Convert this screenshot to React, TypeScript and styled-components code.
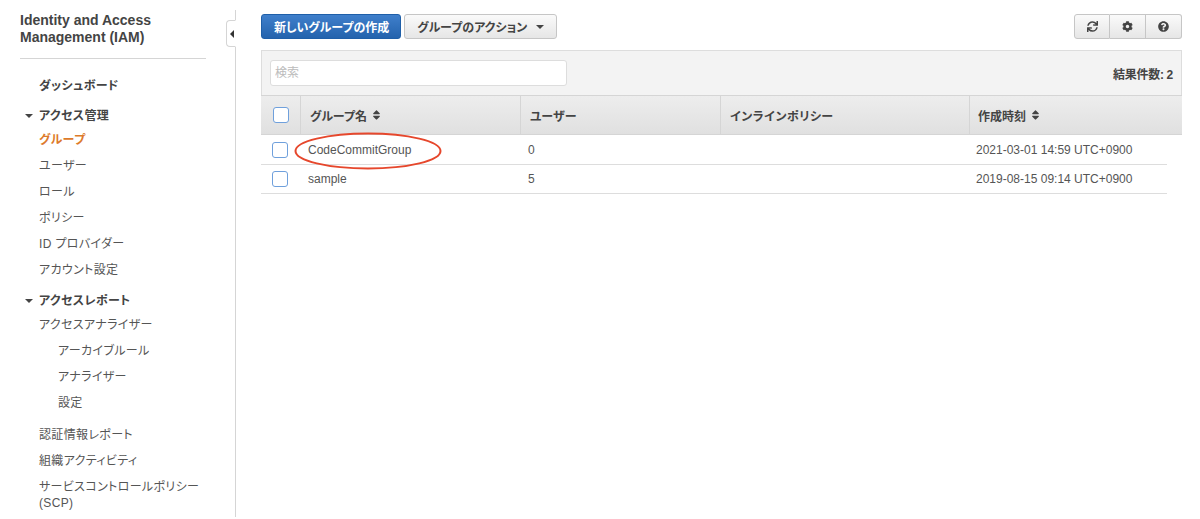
import * as React from "react";
import styled, { createGlobalStyle } from "styled-components";
import { FaCog, FaQuestionCircle, FaSort, FaSync } from "react-icons/fa";

const columns = "39px 220px 200px 249px 213px";

const GlobalStyle = createGlobalStyle`
  html, body {
    margin: 0;
    padding: 0;
    background: #fff;
    overflow: hidden;
  }

  body {
    font-family: "Liberation Sans", "Noto Sans CJK JP", sans-serif;
    font-size: 12px;
    font-feature-settings: "palt";
    color: #555;
  }
`;

export default function App() {
  return (
    <Page>
      <GlobalStyle />
      <Sidebar>
        <Title>Identity and Access Management (IAM)</Title>
        <Nav>
          <NavItem data-strong="true">ダッシュボード</NavItem>
          <Section $gap={6}>
            <SectionHead><Caret />アクセス管理</SectionHead>
            <NavItem data-active="true">グループ</NavItem>
            <NavItem>ユーザー</NavItem>
            <NavItem>ロール</NavItem>
            <NavItem>ポリシー</NavItem>
            <NavItem>ID プロバイダー</NavItem>
            <NavItem>アカウント設定</NavItem>
          </Section>
          <Section $gap={7}>
            <SectionHead><Caret />アクセスレポート</SectionHead>
            <NavItem>アクセスアナライザー</NavItem>
            <SubItem>アーカイブルール</SubItem>
            <SubItem>アナライザー</SubItem>
            <SubItem>設定</SubItem>
          </Section>
          <Section $gap={6}>
            <NavItem>認証情報レポート</NavItem>
            <NavItem>組織アクティビティ</NavItem>
            <NavItem data-wrap="true">サービスコントロールポリシー<br />(SCP)</NavItem>
          </Section>
        </Nav>
        <Toggle><ToggleArrow /></Toggle>
      </Sidebar>
      <Main>
        <Toolbar>
          <PrimaryButton>新しいグループの作成</PrimaryButton>
          <Button>グループのアクション<DownCaret /></Button>
          <IconGroup>
            <IconButton><FaSync size={11} /></IconButton>
            <IconButton><FaCog size={11} /></IconButton>
            <IconButton><FaQuestionCircle size={11} /></IconButton>
          </IconGroup>
        </Toolbar>
        <Panel>
          <FilterBar>
            <Search placeholder="検索" />
            <Count>結果件数: 2</Count>
          </FilterBar>
          <HeadRow>
            <HeadCell><HeadCheck /></HeadCell>
            <HeadCell>グループ名<SortIcon /></HeadCell>
            <HeadCell>ユーザー</HeadCell>
            <HeadCell $wide>インラインポリシー</HeadCell>
            <HeadCell>作成時刻<SortIcon /></HeadCell>
          </HeadRow>
          <Rows>
            <Row>
              <BodyCell><RowCheck /></BodyCell>
              <BodyCell>
                CodeCommitGroup
                <Oval viewBox="0 0 148 38" fill="none">
                  <ellipse cx="74" cy="19" rx="72.5" ry="17.5" stroke="#e6472c" strokeWidth="2" />
                </Oval>
              </BodyCell>
              <BodyCell>0</BodyCell>
              <BodyCell />
              <BodyCell>2021-03-01 14:59 UTC+0900</BodyCell>
            </Row>
            <Row>
              <BodyCell><RowCheck /></BodyCell>
              <BodyCell>sample</BodyCell>
              <BodyCell>5</BodyCell>
              <BodyCell />
              <BodyCell>2019-08-15 09:14 UTC+0900</BodyCell>
            </Row>
          </Rows>
        </Panel>
      </Main>
    </Page>
  );
}

const Page = styled.div`
  display: flex;
  width: 1200px;
  height: 519px;
  overflow: hidden;
`;

const Sidebar = styled.aside`
  position: relative;
  flex: 0 0 236px;
  box-sizing: border-box;
  height: 507px;
  margin-top: 10px;
  padding: 2px 29px 0 20px;
  border-right: 1px solid #d5d5d5;
`;

const Title = styled.h1`
  margin: 0;
  padding-bottom: 12px;
  border-bottom: 1px solid #d5d5d5;
  font-size: 14px;
  line-height: 17px;
  font-weight: 700;
  color: #444;
`;

const Nav = styled.nav`
  display: flex;
  flex-direction: column;
  padding-top: 14px;
  letter-spacing: 0.35px;
`;

const Section = styled.div<{ $gap: number }>`
  padding-top: ${({ $gap }) => $gap}px;
`;

const NavItem = styled.a`
  display: block;
  padding-left: 19px;
  line-height: 26px;
  color: #555;

  &[data-strong="true"] {
    font-weight: 700;
    color: #444;
  }

  &[data-active="true"] {
    font-weight: 700;
    color: #dd7a2b;
  }

  &[data-wrap="true"] {
    margin-right: -10px;
    padding-top: 5px;
    line-height: 16px;
  }
`;

const SubItem = styled(NavItem)`
  padding-left: 38px;
`;

const SectionHead = styled.div`
  display: flex;
  align-items: center;
  padding-left: 5px;
  line-height: 22px;
  font-weight: 700;
  color: #444;
`;

const Caret = styled.span`
  width: 0;
  height: 0;
  margin-right: 6px;
  border-left: 4px solid transparent;
  border-right: 4px solid transparent;
  border-top: 4px solid #444;
`;

const Toggle = styled.button`
  position: absolute;
  top: 10px;
  right: -1px;
  box-sizing: border-box;
  width: 10px;
  height: 27px;
  padding: 0;
  border: 1px solid #d5d5d5;
  border-right: 1px solid #fff;
  border-radius: 4px 0 0 4px;
  background: #fff;
`;

const ToggleArrow = styled.span`
  display: block;
  width: 0;
  height: 0;
  margin-left: 3px;
  border-top: 4px solid transparent;
  border-bottom: 4px solid transparent;
  border-right: 4px solid #333;
`;

const Main = styled.main`
  flex: 1;
  position: relative;
  padding: 14px 18px 0 25px;
`;

const Toolbar = styled.div`
  display: flex;
  gap: 3px;
  height: 25px;
  margin-bottom: 11px;
`;

const Button = styled.button`
  display: flex;
  align-items: center;
  box-sizing: border-box;
  height: 25px;
  padding: 0 12px;
  border: 1px solid #c6c6c6;
  border-radius: 3px;
  background: linear-gradient(#fafafa, #e6e6e6);
  font: 700 12px "Liberation Sans", "Noto Sans CJK JP", sans-serif;
  font-feature-settings: "palt";
  color: #444;
`;

const PrimaryButton = styled(Button)`
  padding-right: 11px;
  border-color: #1f5fa8;
  background: linear-gradient(#3f7fcb, #2463ad);
  color: #fff;
`;

const DownCaret = styled(Caret)`
  margin: 0 0 0 9px;
`;

const IconGroup = styled.div`
  display: flex;
  margin-left: auto;
`;

const IconButton = styled(Button)`
  justify-content: center;
  width: 36px;
  padding: 0;
  border-radius: 0;
  border-left-width: 0;

  &:first-child {
    border-left-width: 1px;
    border-radius: 3px 0 0 3px;
  }

  &:last-child {
    border-radius: 0 3px 3px 0;
  }
`;

const Panel = styled.section`
  position: relative;
`;

const FilterBar = styled.div`
  display: flex;
  align-items: center;
  justify-content: space-between;
  box-sizing: border-box;
  height: 45px;
  padding: 0 8px;
  border: 1px solid #ddd;
  border-bottom: 0;
  background: #f3f3f3;
`;

const Search = styled.input`
  box-sizing: border-box;
  width: 297px;
  height: 26px;
  padding: 0 4px;
  border: 1px solid #ddd;
  border-radius: 3px;
  background: #fff;
  font: 12px "Liberation Sans", "Noto Sans CJK JP", sans-serif;

  &::placeholder {
    color: #bbb;
  }
`;

const Count = styled.span`
  font-weight: 700;
  color: #444;
  letter-spacing: -0.3px;
`;

const HeadRow = styled.div`
  display: grid;
  grid-template-columns: ${columns};
  height: 40px;
  border-top: 1px solid #d5d5d5;
  border-bottom: 1px solid #d5d5d5;
  box-sizing: border-box;
  background: linear-gradient(#ededed, #e0e0e0);
`;

const HeadCell = styled.div<{ $wide?: boolean }>`
  display: flex;
  align-items: center;
  padding-left: 9px;
  border-left: 1px solid #d5d5d5;
  font-weight: 700;
  color: #444;
  letter-spacing: ${({ $wide }) => ($wide ? "0.5px" : "0")};

  &:first-child {
    border-left: 0;
    padding-left: 12px;
  }

  &:last-child {
    padding-left: 8px;
  }
`;

const SortIcon = styled(FaSort)`
  width: 11px;
  height: 12px;
  margin-left: 4px;
  color: #444;
`;

const HeadCheck = styled.span`
  box-sizing: border-box;
  width: 16px;
  height: 16px;
  border: 1px solid #6fa0dc;
  border-radius: 3px;
  background: #fff;
`;

const Rows = styled.div`
  padding-top: 1px;
`;

const Row = styled.div`
  display: grid;
  grid-template-columns: ${columns};
  width: 906px;
  height: 29px;
  box-sizing: border-box;
  border-bottom: 1px solid #ddd;
`;

const BodyCell = styled.div`
  position: relative;
  display: flex;
  align-items: center;
  padding-left: 8px;
  color: #555;

  &:first-child {
    padding-left: 11px;
  }

  &:last-child {
    padding-left: 7px;
  }
`;

const RowCheck = styled(HeadCheck)``;

const Oval = styled.svg`
  position: absolute;
  left: -6px;
  top: -4px;
  width: 148px;
  height: 38px;
`;
